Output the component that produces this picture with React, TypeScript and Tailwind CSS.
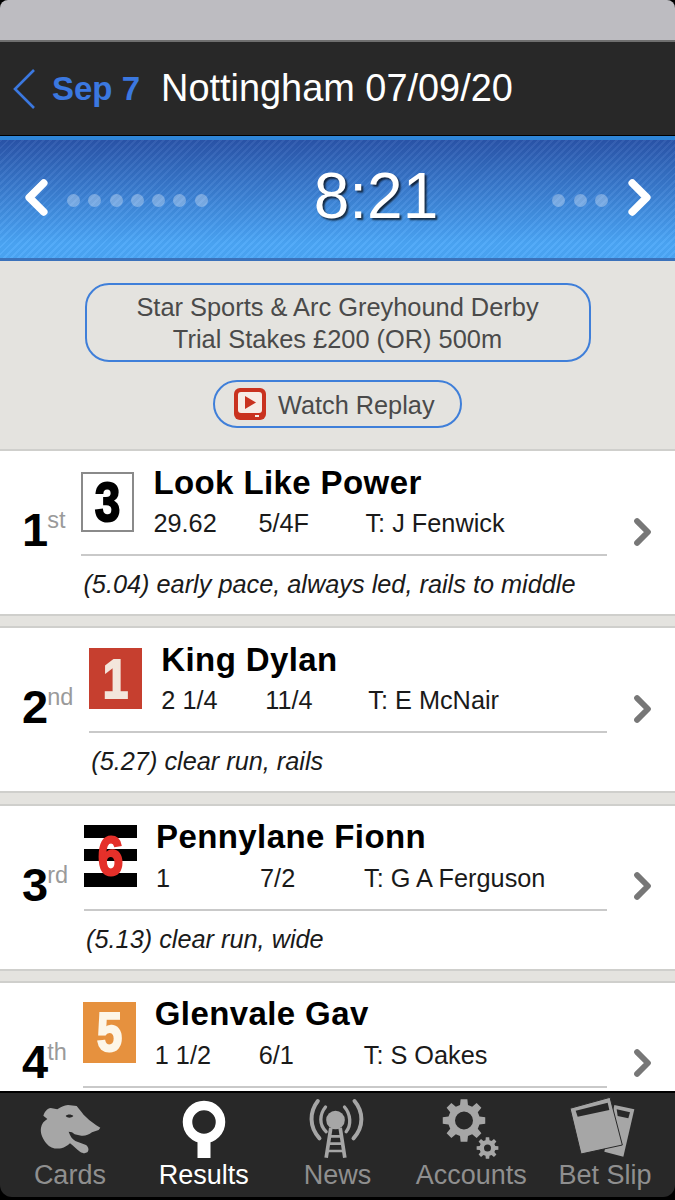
import React from "react";

const gear = (cx: number, cy: number, ro: number, ri: number, hole: number, n: number) => {
  let d = "";
  const step = (Math.PI * 2) / n;
  for (let i = 0; i < n; i++) {
    const a = i * step - Math.PI / 2;
    const pts: [number, number][] = [
      [ri, a - step * 0.32],
      [ro, a - step * 0.2],
      [ro, a + step * 0.2],
      [ri, a + step * 0.32],
    ];
    pts.forEach(([r, t], j) => {
      const x = (cx + r * Math.cos(t)).toFixed(2);
      const y = (cy + r * Math.sin(t)).toFixed(2);
      d += (i === 0 && j === 0 ? "M" : "L") + x + " " + y + " ";
    });
  }
  d += "Z ";
  d += `M${cx + hole} ${cy} A${hole} ${hole} 0 1 0 ${cx - hole} ${cy} A${hole} ${hole} 0 1 0 ${cx + hole} ${cy} Z`;
  return d;
};

const Chevron = ({ dir, className }: { dir: "l" | "r"; className: string }) => (
  <svg viewBox="0 0 24 36" className={className}>
    <path
      d={dir === "l" ? "M19 4 L5 18 L19 32" : "M5 4 L19 18 L5 32"}
      fill="none"
      stroke="currentColor"
      strokeWidth="7.5"
      strokeLinecap="round"
      strokeLinejoin="round"
    />
  </svg>
);

const Dots = ({ n }: { n: number }) => (
  <div className="flex gap-[8.3px]">
    {Array.from({ length: n }).map((_, i) => (
      <div key={i} className="w-[13px] h-[13px] rounded-full bg-white/30" />
    ))}
  </div>
);

const SilkDigit = ({ children, className }: { children: string; className: string }) => (
  <span
    className={
      "font-['Liberation_Sans'] font-bold text-[56px] leading-none scale-x-[0.82] [-webkit-text-stroke:2px_currentColor] " +
      className
    }
  >
    {children}
  </span>
);

const Silk = ({ kind }: { kind: 3 | 1 | 6 | 5 }) => {
  if (kind === 3)
    return (
      <div className="w-[53px] h-[60px] shrink-0 border-2 border-[#8a8a8a] bg-white flex items-center justify-center">
        <SilkDigit className="text-black">3</SilkDigit>
      </div>
    );
  if (kind === 1)
    return (
      <div className="w-[53px] h-[61px] -mt-[1px] shrink-0 bg-[#c63f2f] flex items-center justify-center">
        <SilkDigit className="text-[#f3e6dc]">1</SilkDigit>
      </div>
    );
  if (kind === 5)
    return (
      <div className="w-[53px] h-[61px] -mt-[2px] shrink-0 bg-[#e6913e] flex items-center justify-center">
        <SilkDigit className="text-[#fdf6e8]">5</SilkDigit>
      </div>
    );
  return (
    <div className="relative w-[53px] h-[62px] -mt-[2px] shrink-0 flex flex-col justify-between">
      <div className="h-[13px] bg-black" />
      <div className="h-[12px] bg-black" />
      <div className="h-[14px] bg-black" />
      <div className="absolute inset-0 flex items-center justify-center">
        <SilkDigit className="text-[#e5302a]">6</SilkDigit>
      </div>
    </div>
  );
};

type Runner = {
  pos: string;
  suf: string;
  kind: 3 | 1 | 6 | 5;
  name: string;
  a: string;
  b: string;
  t: string;
  c: string;
  wa: string;
  wb: string;
};

const runners: Runner[] = [
  { pos: "1", suf: "st", kind: 3, name: "Look Like Power", a: "29.62", b: "5/4F", t: "T: J Fenwick", c: "(5.04) early pace, always led, rails to middle", wa: "w-[105px]", wb: "w-[107px]" },
  { pos: "2", suf: "nd", kind: 1, name: "King Dylan", a: "2 1/4", b: "11/4", t: "T: E McNair", c: "(5.27) clear run, rails", wa: "w-[104px]", wb: "w-[103px]" },
  { pos: "3", suf: "rd", kind: 6, name: "Pennylane Fionn", a: "1", b: "7/2", t: "T: G A Ferguson", c: "(5.13) clear run, wide", wa: "w-[104px]", wb: "w-[104px]" },
  { pos: "4", suf: "th", kind: 5, name: "Glenvale Gav", a: "1 1/2", b: "6/1", t: "T: S Oakes", c: "", wa: "w-[104px]", wb: "w-[105px]" },
];

const Card = ({ r }: { r: Runner }) => (
  <div className="h-[167px] shrink-0 bg-white border-y-2 border-[#cfcfcc] flex pl-[22px] pr-[23px]">
    <div className="flex items-start mt-[56px] mr-[16px] h-[46px]">
      <span className="text-[47px] leading-[46px] font-bold text-black">{r.pos}</span>
      <span className="text-[23.5px] leading-[24px] text-[#9a9a9a] -ml-[1px] mt-[1px]">{r.suf}</span>
    </div>
    <div className="flex-1 min-w-0">
      <div className="flex pt-[21px] h-[105px] border-b-2 border-[#c9c9c9]">
        <Silk kind={r.kind} />
        <div className="ml-[19px] -mt-[8.5px]">
          <div className="text-[33px] leading-[38px] font-bold text-black tracking-[0.4px] whitespace-nowrap">{r.name}</div>
          <div className="flex text-[25.3px] leading-[30px] text-[#1a1a1a] mt-[6.5px]">
            <span className={r.wa}>{r.a}</span>
            <span className={r.wb}>{r.b}</span>
            <span className="whitespace-nowrap">{r.t}</span>
          </div>
        </div>
      </div>
      <div className="pl-[2px] mt-[13px] text-[25.3px] leading-[30px] italic text-[#1a1a1a] whitespace-nowrap">{r.c}</div>
    </div>
    <div className="self-center ml-[26px] -mt-[2px]">
      <Chevron dir="r" className="w-[19px] h-[28px] text-[#777777]" />
    </div>
  </div>
);

const DogIcon = () => (
  <svg viewBox="-15 0 270 195" className="w-[90px] h-[65px] text-[#a6a6a6]">
    <path
      fill="currentColor"
      d="M40 62 C44 50 52 40 62 39 L82 43 C92 36 102 31 114 30 L140 33 C150 44 158 58 168 66 C180 78 194 88 211 98 L206 105 L186 112 C176 120 166 123 154 122 L134 118 L126 112 L116 110 C120 122 126 132 136 138 L168 150 C176 156 178 166 172 172 C166 176 158 175 150 170 C140 164 130 152 120 145 C112 152 104 158 94 160 C76 163 60 158 50 146 C38 132 30 114 33 98 C35 86 42 78 52 72 Z"
    />
    <path fill="#282828" d="M107 63 C112 57 124 57 130 63 C124 69 113 70 107 63 Z" />
  </svg>
);

const ResultsIcon = () => (
  <svg viewBox="0 0 44 65" className="w-[44px] h-[65px]">
    <circle cx="22" cy="27" r="16.5" fill="none" stroke="#fff" strokeWidth="9.5" />
    <rect x="15.5" y="42" width="13" height="21" fill="#fff" />
  </svg>
);

const NewsIcon = () => (
  <svg viewBox="7.5 0 270 195" className="w-[90px] h-[65px] text-[#a6a6a6]">
    <g fill="none" stroke="currentColor" strokeLinecap="round">
      <path d="M85 18 C60 50 58 95 90 130" strokeWidth="12" />
      <path d="M108 36 C90 58 88 90 110 110" strokeWidth="10" />
      <path d="M195 18 C222 50 224 95 192 130" strokeWidth="12" />
      <path d="M165 36 C184 58 186 90 170 110" strokeWidth="10" />
    </g>
    <circle cx="138" cy="75" r="28" fill="currentColor" />
    <path d="M124 98 L110 188 M152 98 L166 188" stroke="currentColor" strokeWidth="11" fill="none" />
    <path d="M120 124 H156 M116 146 H160 M112 168 H164" stroke="currentColor" strokeWidth="8" fill="none" />
  </svg>
);

const AccountsIcon = () => (
  <svg viewBox="0 0 60 65" className="w-[60px] h-[65px] text-[#a6a6a6]">
    <path fill="currentColor" fillRule="evenodd" d={gear(23, 25.5, 21.5, 16, 9, 8)} />
    <path fill="currentColor" fillRule="evenodd" d={gear(46.5, 53, 11, 8, 3.5, 8)} />
  </svg>
);

const BetSlipIcon = () => (
  <svg viewBox="675 45 270 195" className="w-[90px] h-[65px]">
    <polygon points="838,75 898,88 865,230 808,215" fill="#a6a6a6" />
    <polygon points="845,88 885,97 880,115 848,108" fill="#282828" />
    <polygon points="705,85 825,52 862,195 738,222" fill="#a6a6a6" stroke="#282828" strokeWidth="3" />
    <polygon points="722,92 818,68 823,90 728,110" fill="#282828" />
  </svg>
);

const tabs = [
  { label: "Cards", icon: <DogIcon />, on: false },
  { label: "Results", icon: <ResultsIcon />, on: true },
  { label: "News", icon: <NewsIcon />, on: false },
  { label: "Accounts", icon: <AccountsIcon />, on: false },
  { label: "Bet Slip", icon: <BetSlipIcon />, on: false },
];

export default function App() {
  return (
    <div className="w-[675px] h-[1200px] bg-black overflow-hidden flex flex-col font-['Liberation_Sans',Arial,sans-serif]">
      <div className="h-[40px] shrink-0 bg-[#bdbcc1] rounded-t-[8px]" />
      <div className="h-[96px] shrink-0 bg-[#282828] border-t-2 border-[#6f6f6f] border-b border-b-black flex items-center pl-[12px]">
        <svg viewBox="0 0 24 40" className="w-[24px] h-[40px] text-[#3b78e0] mr-[16px]">
          <path d="M22 1 L3 20 L22 39" fill="none" stroke="currentColor" strokeWidth="2.6" />
        </svg>
        <span className="text-[33px] font-bold text-[#3b78e0] mr-[21px]">Sep 7</span>
        <span className="text-[37.9px] text-white whitespace-nowrap">Nottingham 07/09/20</span>
      </div>
      <div className="h-[125px] shrink-0 border-t-[4px] border-[#2f86d8] border-b-[3px] border-b-[#3b72bb] bg-[repeating-linear-gradient(135deg,rgba(255,255,255,0.05)_0_2px,rgba(0,0,0,0.03)_2px_5px),linear-gradient(to_bottom,#2a55ab,#4ba7f8_88%)] flex items-center relative pl-[24px] pr-[23px] justify-between">
        <div className="flex items-center gap-[18px]">
          <Chevron dir="l" className="w-[25px] h-[37px] text-white -mt-[3px]" />
          <div className="mt-[2px]">
            <Dots n={7} />
          </div>
        </div>
        <div className="flex items-center gap-[19px]">
          <div className="mt-[2px]">
            <Dots n={3} />
          </div>
          <Chevron dir="r" className="w-[25px] h-[37px] text-white -mt-[3px]" />
        </div>
        <div className="absolute inset-0 flex items-center justify-center">
          <span className="text-[64px] leading-none text-white [text-shadow:2px_2px_2px_rgba(0,0,0,0.7)] -mt-[6px] ml-[77px]">8:21</span>
        </div>
      </div>
      <div className="flex-1 min-h-0 overflow-hidden bg-[#e4e3df] flex flex-col items-center pt-[22px]">
        <div className="w-[506px] h-[79px] shrink-0 border-2 border-[#3f7fd9] rounded-[24px] flex flex-col items-center justify-center text-[25.4px] leading-[32px] text-[#4a4a4a]">
          <div>Star Sports &amp; Arc Greyhound Derby</div>
          <div>Trial Stakes £200 (OR) 500m</div>
        </div>
        <div className="mt-[18px] w-[249px] h-[48px] shrink-0 border-2 border-[#3f7fd9] rounded-full flex items-center pl-[19px] text-[25.3px] text-[#4a4a4a]">
          <svg viewBox="0 0 32 32" className="w-[32px] h-[32px] mr-[12px]">
            <rect x="0" y="0" width="32" height="32" rx="6" fill="#c9321f" />
            <rect x="4" y="4" width="24" height="21" rx="3" fill="#f6ece6" />
            <path d="M11 8 L22 14.5 L11 21 Z" fill="#c9321f" />
            <rect x="21" y="27" width="4" height="2" fill="#f6ece6" />
          </svg>
          <span className="whitespace-nowrap pt-[3px]">Watch Replay</span>
        </div>
        <div className="mt-[21px] w-full flex flex-col gap-[10.3px] shrink-0">
          {runners.map((r) => (
            <Card key={r.name} r={r} />
          ))}
        </div>
      </div>
      <div className="h-[109px] shrink-0 border-t-2 border-black bg-black">
        <div className="h-[104px] bg-[#282828] rounded-b-[12px] grid grid-cols-5 px-[3px]">
          {tabs.map((t) => (
            <div key={t.label} className="flex flex-col items-center">
              <div className="h-[65px] flex items-center justify-center mt-[2px] overflow-visible">{t.icon}</div>
              <span className={"text-[27px] leading-[32px] -mt-[1px] whitespace-nowrap " + (t.on ? "text-white" : "text-[#8f8f8f]")}>{t.label}</span>
            </div>
          ))}
        </div>
      </div>
    </div>
  );
}
